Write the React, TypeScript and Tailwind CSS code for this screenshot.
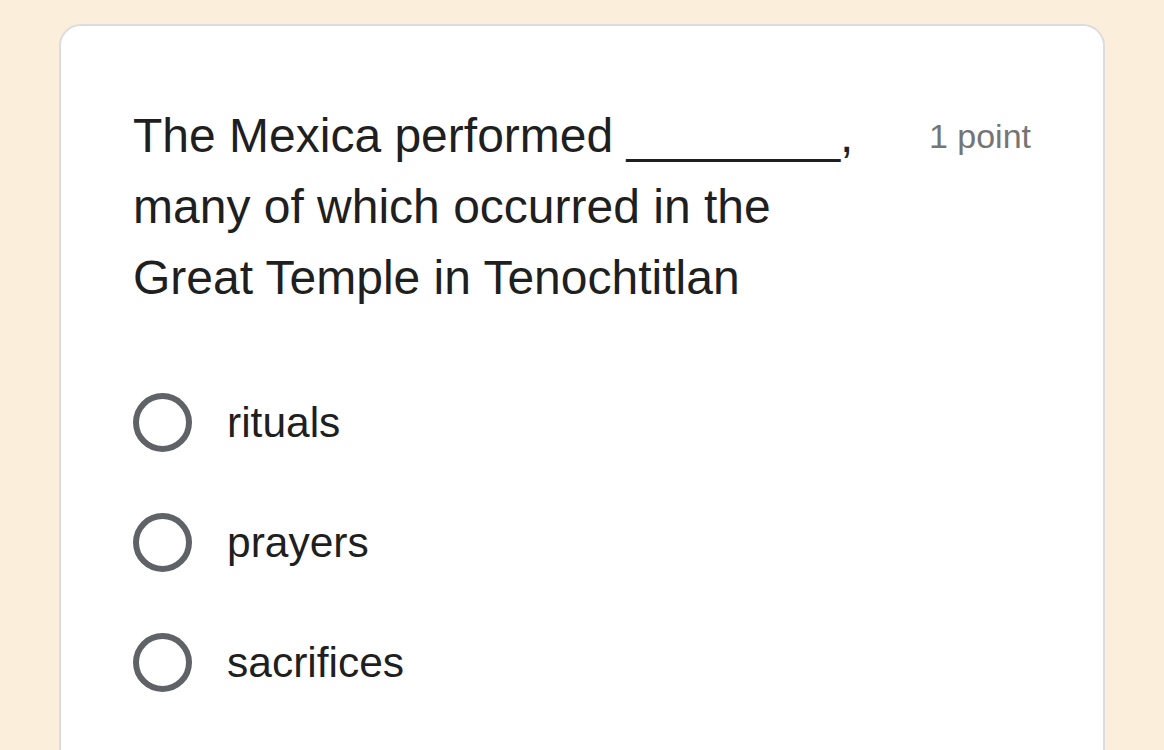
const options = ["rituals", "prayers", "sacrifices"];

const App = () => {
  return (
    <div
      className="h-[750px] w-full overflow-hidden bg-[#fbefdc] pt-[24px] px-[59px]"
      style={{ fontFamily: '"Liberation Sans", Arial, sans-serif' }}
    >
      <div className="min-h-[800px] rounded-[22px] border-2 border-[#dadce0] bg-white px-[72px] pt-[74px]">
        <div className="flex items-start justify-between gap-[48px]">
          <h2 className="w-[748px] text-[48px] leading-[71px] font-normal text-[#1f1f1f]">
            The Mexica performed ________, many of which occurred in the Great
            Temple in Tenochtitlan
          </h2>
          <span className="mt-[12px] whitespace-nowrap text-[34px] leading-[48px] text-[#757575]">
            1 point
          </span>
        </div>
        <div className="mt-[80px] flex flex-col gap-[61px]">
          {options.map((opt) => (
            <label key={opt} className="flex cursor-pointer items-center gap-[35px]">
              <span className="h-[59px] w-[59px] shrink-0 rounded-full border-[6px] border-[#5f6368]" />
              <span className="text-[42.5px] leading-[50px] text-[#1f1f1f]">{opt}</span>
            </label>
          ))}
        </div>
      </div>
    </div>
  );
};

export default App;
